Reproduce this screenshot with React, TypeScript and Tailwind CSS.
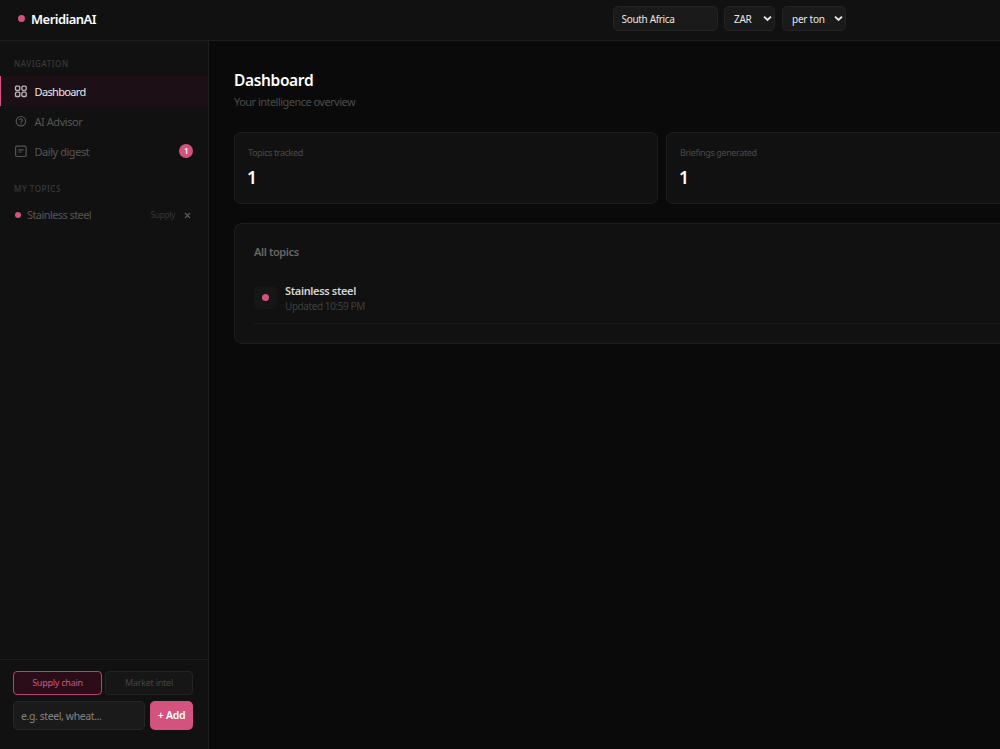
import type { ReactNode } from "react";

function SelectBox({ label, className }: { label: string; className: string }) {
  return (
    <button
      className={`flex h-[25px] items-center justify-between rounded-[5px] border border-[#242424] bg-[#1a1a1a] pr-[2px] text-[10px] text-[#e8e8e8] ${className}`}
    >
      <span className="mt-[2px]">{label}</span>
      <svg width="9" height="7" viewBox="0 0 9 7" fill="none" stroke="currentColor" strokeWidth="1.9">
        <path d="M1 1.6 4.5 5 8 1.6" />
      </svg>
    </button>
  );
}

function NavItem({
  icon,
  label,
  active,
  badge,
}: {
  icon: ReactNode;
  label: string;
  active?: boolean;
  badge?: number;
}) {
  return (
    <a
      className={`flex h-[30px] items-center border-l pr-[15px] pl-[13px] text-[11px] ${
        active
          ? "border-[#d4537e] bg-[#1c0f15] tracking-[-0.65px] text-[#e8e8e8]"
          : "border-transparent tracking-[-0.45px] text-[#555]"
      }`}
    >
      {icon}
      <span className="mt-[2px] ml-[7.5px]">{label}</span>
      {badge && (
        <span className="ml-auto flex h-[14px] w-[14px] items-center justify-center rounded-full bg-[#d4537e] text-[8px] font-semibold text-white">
          {badge}
        </span>
      )}
    </a>
  );
}

function StatCard({ label, value }: { label: string; value: number }) {
  return (
    <div className="h-[72px] w-[424px] shrink-0 rounded-[7px] border border-[#1e1e1e] bg-[#111] px-[13px] pt-[13px]">
      <p className="text-[9px] leading-[14px] tracking-[-0.38px] text-[#4a4a4a]">{label}</p>
      <p className="-ml-px mt-[5px] text-[17.5px] leading-[24px] font-semibold text-white">{value}</p>
    </div>
  );
}

const gridIcon = (
  <svg width="13" height="13" viewBox="0 0 13 13" fill="none" stroke="#bdb7ba" strokeWidth="1.3">
    <rect x="1.5" y="1.1" width="4.3" height="4.3" rx="1.1" />
    <rect x="7.9" y="1.1" width="4.3" height="4.3" rx="1.1" />
    <rect x="1.5" y="7.2" width="4.3" height="4.3" rx="1.1" />
    <rect x="7.9" y="7.2" width="4.3" height="4.3" rx="1.1" />
  </svg>
);

const helpIcon = (
  <svg width="13" height="13" viewBox="0 0 13 13" fill="none" stroke="currentColor" strokeWidth="1.2">
    <circle cx="6.9" cy="6.2" r="4.7" />
    <path d="M5.4 5.3c0-1.9 3-1.9 3 0 0 1.1-1.5 1.1-1.5 2.2" />
    <path d="M6.9 8.3v1" />
  </svg>
);

const digestIcon = (
  <svg width="13" height="13" viewBox="0 0 13 13" fill="none" stroke="currentColor" strokeWidth="1.2">
    <rect x="1.6" y="1.2" width="10.5" height="10.3" rx="1.2" />
    <path d="M4.3 4.8h5.2M4.3 7h3.4" />
  </svg>
);

function Sidebar() {
  return (
    <aside className="flex w-[209px] shrink-0 flex-col border-r border-[#1e1e1e] bg-[#111]">
      <h2 className="mt-[16px] ml-[14px] h-[19px] text-[8px] leading-[14px] font-medium tracking-[0.55px] text-[#3a3a3a]">
        NAVIGATION
      </h2>
      <nav>
        <NavItem icon={gridIcon} label="Dashboard" active />
        <NavItem icon={helpIcon} label="AI Advisor" />
        <NavItem icon={digestIcon} label="Daily digest" badge={1} />
      </nav>
      <h2 className="mt-[16px] ml-[14px] text-[8px] leading-[14px] font-medium tracking-[0.55px] text-[#3a3a3a]">
        MY TOPICS
      </h2>
      <div className="mt-[6px] flex h-[26px] items-center pr-[17px] pl-[15px]">
        <span className="h-[6px] w-[6px] rounded-full bg-[#d4537e]" />
        <span className="ml-[6px] text-[11px] tracking-[-0.58px] text-[#555]">Stainless steel</span>
        <span className="ml-auto text-[8.5px] tracking-[-0.4px] text-[#363636]">Supply</span>
        <svg className="ml-[9px]" width="7" height="7" viewBox="0 0 7 7" stroke="#5c5c5c" strokeWidth="1.1">
          <path d="M1 1l5 5M6 1 1 6" />
        </svg>
      </div>

      <div className="mt-auto border-t border-[#1e1e1e] pt-[11px] pr-[15px] pb-[19px] pl-[13px]">
        <div className="flex gap-[3px]">
          <button className="h-[24px] w-[89px] rounded-[4px] border border-[#b0466b] bg-[#2a0d19] text-[9px] text-[#d4537e]">
            Supply chain
          </button>
          <button className="h-[24px] flex-1 rounded-[4px] border border-[#232323] bg-[#161616] text-[9px] text-[#444]">
            Market intel
          </button>
        </div>
        <div className="mt-[6px] flex gap-[5px]">
          <input
            className="h-[29px] w-[132px] rounded-[5px] border border-[#262626] bg-[#1a1a1a] px-[7px] text-[10.5px] tracking-[-0.4px] placeholder:text-[#828282]"
            placeholder="e.g. steel, wheat..."
          />
          <button className="h-[29px] flex-1 rounded-[5px] bg-[#d4537e] text-[10.5px] font-semibold whitespace-nowrap text-white">
            + Add
          </button>
        </div>
      </div>
    </aside>
  );
}

export default function App() {
  return (
    <div className="flex h-screen flex-col overflow-hidden bg-[#0a0a0a] font-['Noto_Sans','Open_Sans',sans-serif] tracking-[-0.25px] text-[#e8e8e8]">
      <header className="flex h-[41px] shrink-0 items-center border-b border-[#1e1e1e] bg-[#111] pb-[4px] pl-[18px]">
        <span className="h-[7px] w-[7px] rounded-full bg-[#d4537e]" />
        <span className="mt-[3px] ml-[6px] text-[13px] font-semibold tracking-[-0.52px] text-white">MeridianAI</span>
        <div className="mr-[154px] ml-auto flex gap-[7px]">
          <input
            className="-mr-px h-[25px] w-[105px] rounded-[5px] border border-[#242424] bg-[#1a1a1a] px-[7.5px] pt-[2px] text-[10px] tracking-[-0.33px]"
            defaultValue="South Africa"
          />
          <SelectBox label="ZAR" className="w-[51px] pl-[9px]" />
          <SelectBox label="per ton" className="w-[64px] pl-[9px]" />
        </div>
      </header>

      <div className="flex min-h-0 flex-1">
        <Sidebar />
        <main className="min-w-0 flex-1 overflow-hidden pt-[28px] pl-[25px]">
          <h1 className="text-[15.5px] leading-[22px] font-semibold tracking-[-0.35px] text-white">Dashboard</h1>
          <p className="mt-[3px] text-[11px] leading-[16px] tracking-[-0.53px] text-[#4a4a4a]">
            Your intelligence overview
          </p>

          <div className="mt-[22px] flex gap-[8px]">
            <StatCard label="Topics tracked" value={1} />
            <StatCard label="Briefings generated" value={1} />
          </div>

          <section className="mt-[19px] h-[121px] w-[856px] rounded-[8px] border border-[#1e1e1e] bg-[#111] px-[19px] pt-[20px]">
            <h2 className="text-[11px] leading-[16px] font-semibold tracking-[-0.4px] text-[#666]">All topics</h2>
            <div className="mt-[15px] flex h-[49px] items-start border-b border-[#1a1a1a]">
              <span className="mt-[11px] flex h-[23px] w-[23px] items-center justify-center rounded-[5px] bg-[#161616]">
                <span className="h-[7px] w-[7px] rounded-full bg-[#d4537e]" />
              </span>
              <div className="mt-[8px] ml-[8px]">
                <p className="text-[11px] leading-[15px] font-semibold tracking-[-0.35px] text-[#d4d4d4]">
                  Stainless steel
                </p>
                <p className="text-[10px] leading-[16px] tracking-[-0.42px] text-[#3f3f3f]">Updated 10:59 PM</p>
              </div>
            </div>
          </section>
        </main>
      </div>
    </div>
  );
}
